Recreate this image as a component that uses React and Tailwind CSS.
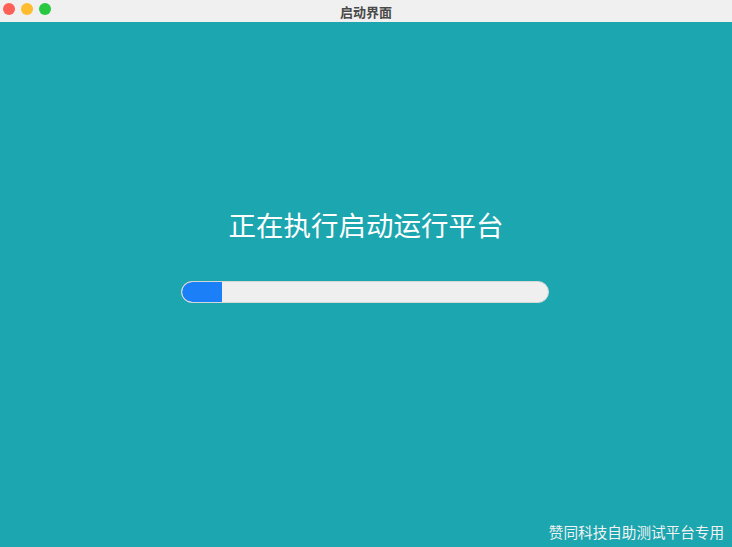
import React from 'react';

const font = { fontFamily: '"Noto Sans CJK SC", "Noto Sans", sans-serif' };

const App = () => {
  const progress = 11;
  return (
    <div className="w-[732px] h-[547px] flex flex-col overflow-hidden" style={font}>
      {/* title bar */}
      <div className="relative h-[22px] bg-[#f0f0f0] flex items-center justify-center shrink-0">
        <div className="absolute left-[3px] top-[3px] flex gap-[6px]">
          <span className="w-[12px] h-[12px] rounded-full bg-[#fe5f57]" />
          <span className="w-[12px] h-[12px] rounded-full bg-[#febc2e]" />
          <span className="w-[12px] h-[12px] rounded-full bg-[#28c840]" />
        </div>
        <span className="text-[13px] font-bold text-[#4a4a4a] leading-none">启动界面</span>
      </div>

      {/* body */}
      <div className="flex-1 bg-[#1ca6b0] flex flex-col items-center pt-[188px]">
        <h1 className="text-[27.5px] leading-[28px] text-white">正在执行启动运行平台</h1>
        <div className="mt-[43px] mr-[2px] w-[368px] h-[22px] rounded-full bg-[#efefef] border border-[#d6d6d6] overflow-hidden flex">
          <div className="h-full bg-[#1b7ff7] rounded-l-full" style={{ width: `${progress}%` }} />
        </div>
        <div className="mt-auto self-end pr-[8px] pb-[7px] text-[14.6px] leading-[16px] text-[#f2f2f2] whitespace-nowrap">
          赞同科技自助测试平台专用
        </div>
      </div>
    </div>
  );
};

export default App;
